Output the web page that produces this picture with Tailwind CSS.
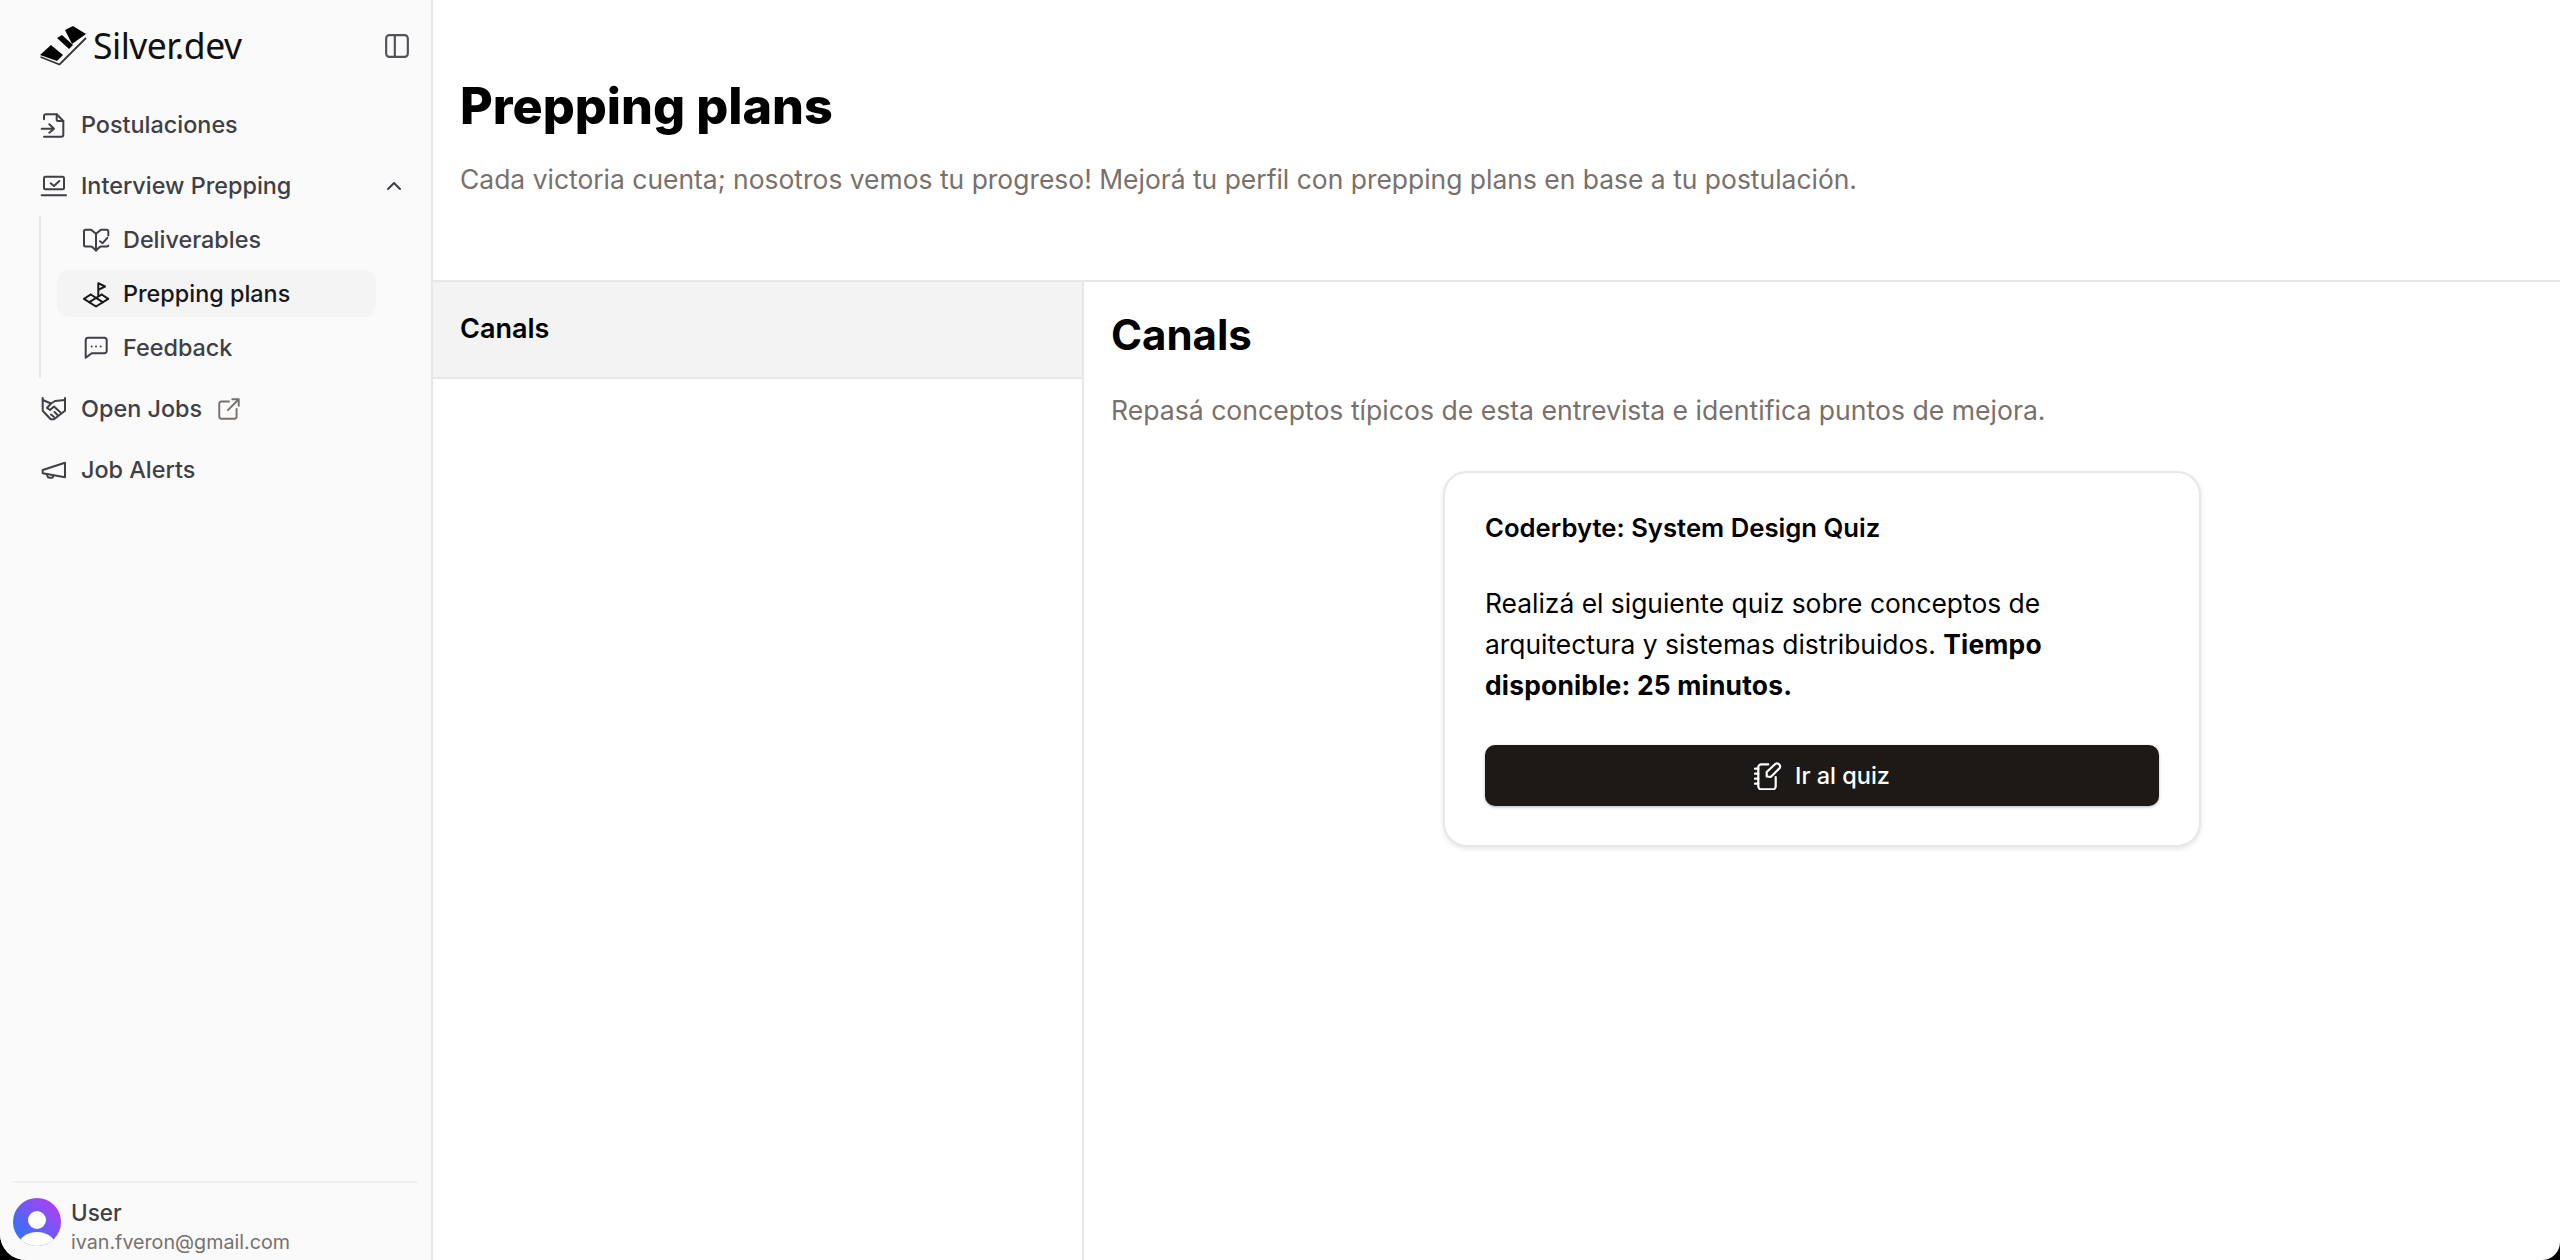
<!DOCTYPE html>
<html lang="en">
<head>
    <meta charset="UTF-8">
    <meta name="viewport" content="width=device-width, initial-scale=1.0">
    <title>Prepping plans</title>
    <script src="https://cdn.jsdelivr.net/npm/@tailwindcss/browser@4"></script>
</head>
<body class="bg-black font-['Inter',sans-serif]">
    <div class="flex h-[1260px] w-[2560px] overflow-hidden rounded-bl-[26px] rounded-br-[18px] bg-white text-black">
        <!-- sidebar -->
        <aside class="flex w-[433px] shrink-0 flex-col border-r-2 border-[#e7e7e7] bg-[#fafafa]">
            <div class="flex h-[92px] items-center justify-between pl-[40px] pr-[21px]">
                <div class="flex items-center gap-[6px]">
                    <svg class="h-[40px] w-[47px]" viewBox="10 6 47 40">
                        <path d="M35 10L43 6L56 14L42 24Z" fill="#000"/>
                        <path d="M27 18L32 15L43 25L39 29Z" fill="#000"/>
                        <path d="M10 35L21 25L33 35L27 41Z" fill="#000"/>
                        <path d="M10.500 37L29.500 44.500L56 18" fill="none" stroke="#333" stroke-width="1.800"/>
                    </svg>
                    <span class="font-['Noto_Sans',sans-serif] text-[35.500px] leading-none tracking-[-0.5px] text-[#111]">Silver.dev</span>
                </div>
                <svg class="h-[26px] w-[26px] text-[#52525b]" viewBox="0 0 24 24" fill="none" stroke="currentColor" stroke-width="2" stroke-linecap="round" stroke-linejoin="round">
                    <rect x="2" y="2" width="20" height="20" rx="3"/>
                    <path d="M10 2v20"/>
                </svg>
            </div>

            <nav class="flex flex-col pl-[39px] pt-[2px] text-[23.400px] font-medium text-[#3f3f46]">
                <a class="flex h-[61px] items-center gap-[14px]">
                    <svg class="h-[28px] w-[28px]" viewBox="0 0 28 28" fill="none" stroke="currentColor" stroke-width="2" stroke-linecap="round" stroke-linejoin="round">
                        <path d="M5 8.300V5.300a2 2 0 0 1 2-2h10.700L24.300 10v13.700a2 2 0 0 1-2 2H5"/>
                        <path d="M17.700 3.300V8.500a1.500 1.500 0 0 0 1.500 1.500h5.100"/>
                        <path d="M2.700 17.700H15M10.300 13.300L15 17.700l-4.700 4"/>
                    </svg>
                    Postulaciones
                </a>
                <a class="flex h-[61px] items-center pr-[25px]">
                    <svg class="mr-[14px] h-[28px] w-[28px]" viewBox="0 0 28 28" fill="none" stroke="currentColor" stroke-width="2" stroke-linecap="round" stroke-linejoin="round">
                        <rect x="5" y="4.700" width="20" height="12.600" rx="1.500"/>
                        <path d="M2.700 23.300H27"/>
                        <path d="M11.700 11.300L15 14l5.300-5"/>
                    </svg>
                    Interview Prepping
                    <svg class="ml-auto h-[24px] w-[24px]" viewBox="0 0 24 24" fill="none" stroke="currentColor" stroke-width="2" stroke-linecap="round" stroke-linejoin="round">
                        <path d="M6 15l6-6 6 6"/>
                    </svg>
                </a>
                <div class="mr-[55px] flex flex-col gap-[7px] border-l-2 border-[#e7e7e7] pb-[7px] pl-[16px]">
                    <a class="flex h-[47px] items-center gap-[12px] rounded-[12px] pl-[27px]">
                        <svg class="h-[27px] w-[27px] overflow-visible" viewBox="0 0 27 27" fill="none" stroke="currentColor" stroke-width="2" stroke-linecap="round" stroke-linejoin="round">
                            <path d="M12 24.500V7.800L8 4.500a2 2 0 0 0-1-.7H1.500a1.500 1.500 0 0 0-1.500 1.500V19a1.500 1.500 0 0 0 1.500 1.500H7a2 2 0 0 1 1 .3z"/>
                            <path d="M12 7.800l4-3.300a2 2 0 0 1 1-.7h6a1.500 1.500 0 0 1 1.300 1.400V9.500"/>
                            <path d="M24.300 19.500a1.500 1.500 0 0 1-1.300 1H17a2 2 0 0 0-1 .3l-4 3.700"/>
                            <path d="M16 15.200l2.700 2 4.600-5.400"/>
                        </svg>
                        Deliverables
                    </a>
                    <a class="flex h-[47px] items-center gap-[12px] rounded-[12px] bg-[#f4f4f5] pl-[27px] text-[#18181b]">
                        <svg class="h-[27px] w-[27px] overflow-visible" viewBox="0 0 27 27" fill="none" stroke="currentColor" stroke-width="2" stroke-linecap="round" stroke-linejoin="round">
                            <path d="M14.300 15.500V3.200L21 6.500l-6.700 3.300"/>
                            <path d="M6.700 14.500L0 18.800l12 7.700 12.300-7.700-6.600-4.300"/>
                            <path d="M6.700 14.500l12 7.700M17.700 14.500L5.300 22.200"/>
                        </svg>
                        Prepping plans
                    </a>
                    <a class="flex h-[47px] items-center gap-[12px] rounded-[12px] pl-[27px]">
                        <svg class="h-[27px] w-[27px] overflow-visible" viewBox="0 0 27 27" fill="none" stroke="currentColor" stroke-width="2" stroke-linecap="round" stroke-linejoin="round">
                            <path d="M1.700 23.800V6a2.200 2.200 0 0 1 2.200-2.200h16.600A2.200 2.200 0 0 1 22.700 6v11a2.200 2.200 0 0 1-2.200 2.200H7.700z"/>
                            <path d="M7.700 12.500h.01M12 12.500h.01M16.700 12.500h.01"/>
                        </svg>
                        Feedback
                    </a>
                </div>
                <a class="flex h-[61px] items-center gap-[14px]">
                    <svg class="h-[28px] w-[28px]" viewBox="0 0 28 28" fill="none" stroke="currentColor" stroke-width="2" stroke-linecap="round" stroke-linejoin="round">
                        <path d="M3.700 3v12.700l8 8.600H15l11-8.600V3"/>
                        <path d="M3.700 5L12 8.500l4-2.500 10-1"/>
                        <path d="M12 8.500L8 13l3 2 4-3.500 6.500 6"/>
                        <path d="M12 19.500l3 2.500M15.500 17l3 3"/>
                    </svg>
                    Open Jobs
                    <svg class="h-[26px] w-[26px] text-[#78716c]" viewBox="0 0 24 24" fill="none" stroke="currentColor" stroke-width="1.800" stroke-linecap="round" stroke-linejoin="round">
                        <path d="M12 5H5a2 2 0 0 0-2 2v12a2 2 0 0 0 2 2h12a2 2 0 0 0 2-2v-7"/>
                        <path d="M11 13L21 3M15 3h6v6"/>
                    </svg>
                </a>
                <a class="flex h-[61px] items-center gap-[14px]">
                    <svg class="h-[28px] w-[28px]" viewBox="0 0 28 28" fill="none" stroke="currentColor" stroke-width="2" stroke-linecap="round" stroke-linejoin="round">
                        <path d="M26 6.700v14.600L3.700 17.300V14z"/>
                        <path d="M8.300 18v2a2.500 2.500 0 0 0 2.500 1.800h1.700a2 2 0 0 0 1.800-2"/>
                    </svg>
                    Job Alerts
                </a>
            </nav>

            <div class="mx-[13px] mt-auto flex h-[79px] gap-[10px] border-t-2 border-[#f1f1f1] pt-[15px]">
                <svg class="h-[48px] w-[48px] shrink-0" viewBox="0 0 48 48">
                    <defs>
                        <linearGradient id="avatarFill" x1="0" y1="1" x2="1" y2="0">
                            <stop offset="0.2" stop-color="#3b6ff5"/>
                            <stop offset="0.85" stop-color="#a742f5"/>
                        </linearGradient>
                        <clipPath id="avatarClip"><circle cx="24" cy="24" r="24"/></clipPath>
                    </defs>
                    <circle cx="24" cy="24" r="24" fill="url(#avatarFill)"/>
                    <g clip-path="url(#avatarClip)" fill="#fff">
                        <circle cx="24" cy="22" r="9"/>
                        <ellipse cx="24" cy="47" rx="18" ry="13"/>
                    </g>
                </svg>
                <div class="flex flex-col">
                    <span class="text-[22.500px] font-medium leading-[30px] text-[#3f3f46]">User</span>
                    <span class="text-[19.700px] leading-[28px] text-[#78716c]">ivan.fveron@gmail.com</span>
                </div>
            </div>
        </aside>

        <!-- main -->
        <main class="flex min-w-0 flex-1 flex-col">
            <header class="flex h-[282px] shrink-0 flex-col border-b-2 border-[#e7e7e7] pl-[27px] pt-[76px]">
                <h1 class="text-[50.300px] font-extrabold leading-[60px]">Prepping plans</h1>
                <p class="mt-[24px] text-[26.450px] leading-[38px] text-[#78716c]">Cada victoria cuenta; nosotros vemos tu progreso! Mejorá tu perfil con prepping plans en base a tu postulación.</p>
            </header>
            <div class="flex min-h-0 flex-1">
                <div class="w-[651px] shrink-0 border-r-2 border-[#e7e7e7]">
                    <div class="flex h-[97px] items-center border-b-2 border-[#e7e7e7] bg-[#f3f3f3] pl-[27px] text-[27px] font-semibold">Canals</div>
                </div>
                <section class="flex min-w-0 flex-1 flex-col pl-[27px] pt-[29px]">
                    <h2 class="text-[42px] font-bold leading-[48px]">Canals</h2>
                    <p class="mt-[32px] text-[26.600px] leading-[38px] text-[#78716c]">Repasá conceptos típicos de esta entrevista e identifica puntos de mejora.</p>
                    <div class="ml-[332px] mt-[42px] flex h-[376px] w-[758px] flex-col rounded-[24px] border-2 border-[#e7e7e7] bg-white px-[40px] pt-[36px] shadow-[0_2px_5px_rgba(0,0,0,0.1)]">
                        <h3 class="text-[25.700px] font-semibold leading-[38px]">Coderbyte: System Design Quiz</h3>
                        <p class="mt-[36px] text-[26.400px] leading-[41px]">Realizá el siguiente quiz sobre conceptos de arquitectura y sistemas distribuidos. <strong class="font-bold tracking-[0.2px]">Tiempo disponible: 25 minutos.</strong></p>
                        <button class="mt-[39px] flex h-[61px] w-full shrink-0 items-center justify-center gap-[13px] rounded-[10px] bg-[#1c1917] text-[23.500px] font-medium text-white shadow-[0_1px_3px_rgba(0,0,0,0.3)]">
                            <svg class="h-[28px] w-[28px]" viewBox="0 0 28 28" fill="none" stroke="currentColor" stroke-width="2.200" stroke-linecap="round" stroke-linejoin="round">
                                <path d="M14.300 2.300H7.300a3 3 0 0 0-3 3v19a3 3 0 0 0 3 3h11.400a3 3 0 0 0 3-3V15"/>
                                <path d="M1 6.700h3.300M1 11.700h3.300M1 16.700h3.300M1 21.700h3.300"/>
                                <path d="M12.700 14.500V10l8-7.500a2.900 2.900 0 0 1 4.500 4L17 14.800z"/>
                            </svg>
                            Ir al quiz
                        </button>
                    </div>
                </section>
            </div>
        </main>
    </div>
</body>
</html>
